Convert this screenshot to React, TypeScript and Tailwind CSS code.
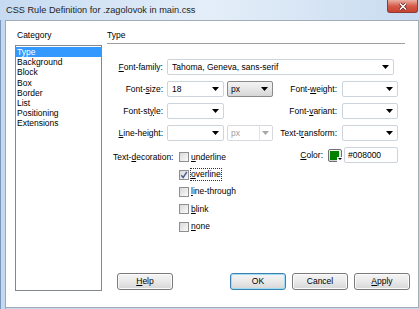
import type { ReactNode } from 'react'

const font = "font-['Liberation_Sans',Arial,sans-serif]"

function Arrow({ muted }: { muted?: boolean }) {
  return (
    <svg width="7" height="4" viewBox="0 0 7 4">
      <path d="M0 0h7L3.5 4z" fill={muted ? '#a8a8a8' : '#000'} />
    </svg>
  )
}

function Select({ className, value }: { className: string; value?: string }) {
  return (
    <div className={`flex h-[16px] items-center justify-between rounded-[2px] border border-[#ced4db] bg-white pl-[4px] pr-[4px] ${className}`}>
      <span className="leading-[14px]">{value}</span>
      <Arrow />
    </div>
  )
}

function Label({ className, children }: { className: string; children: ReactNode }) {
  return <span className={`whitespace-nowrap text-right leading-[11px] ${className}`}>{children}</span>
}

function Check({ checked, children, focus }: { checked?: boolean; children: ReactNode; focus?: boolean }) {
  return (
    <div className="flex h-[17.4px] items-center">
      <span className="flex h-[10px] w-[10px] items-center justify-center border border-[#8f8f8f] bg-linear-to-br from-[#d9d9d9] to-[#fafafa]">
        {checked && (
          <svg width="8" height="8" viewBox="0 0 8 8">
            <path d="M1.2 4.2l2 2.3L6.8 1" stroke="#4a5f97" strokeWidth="1.4" fill="none" />
          </svg>
        )}
      </span>
      <span className={`ml-[2px] leading-[11px] ${focus ? 'outline outline-1 outline-dotted outline-[#333]' : ''}`}>{children}</span>
    </div>
  )
}

function Btn({ children, primary, className }: { children: ReactNode; primary?: boolean; className: string }) {
  return (
    <div
      className={`flex h-[17px] w-[56px] items-center justify-center rounded-[3px] border bg-linear-to-b from-[#f4f4f4] via-[#e9e9e9] to-[#d7d7d7] leading-[11px] ${
        primary ? 'border-[#3c7fb1] shadow-[inset_0_0_0_1px_#9fdcf5]' : 'border-[#7a7a7a] shadow-[inset_0_0_0_1px_#fbfbfb]'
      } ${className}`}
    >
      {children}
    </div>
  )
}

export default function App() {
  const categories = ['Type', 'Background', 'Block', 'Box', 'Border', 'List', 'Positioning', 'Extensions']

  return (
    <div className={`flex h-[309px] w-[419px] flex-col overflow-hidden bg-[#c6d9ef] text-[8.5px] text-black ${font}`}>
      {/* title bar */}
      <div className="flex h-[20px] items-start justify-between bg-linear-to-r from-[#c6daf1] via-[#e4eef9] to-[#c8dbf0] pl-[6px]">
        <span className="mt-[4px] text-[9.2px] leading-[12px] text-[#1e1e1e]">CSS Rule Definition for .zagolovok in main.css</span>
        <div className="mr-[1px] flex h-[13px] w-[31px] items-center justify-center rounded-b-[3px] border border-t-0 border-[#8b3b33] bg-linear-to-b from-[#eab0a4] via-[#d65a4b] to-[#c7432f]">
          <svg width="10" height="9" viewBox="0 0 10 9">
            <path d="M2 1.5l6 6M8 1.5l-6 6" stroke="#5a1d18" strokeWidth="3" />
            <path d="M2 1.5l6 6M8 1.5l-6 6" stroke="#fff" strokeWidth="1.6" />
          </svg>
        </div>
      </div>

      <div className="flex flex-1">
        {/* left frame */}
        <div className="w-[6px] border-l border-r border-l-[#7a98bf] border-r-[#92abc9] bg-[#c4d8ee]" />

        {/* dialog body */}
        <div className="flex flex-1 flex-col">
          <div className="flex flex-1 border-b border-r border-t border-[#a3acb6] bg-white pb-[16px] pl-[9px] pt-[9px]">
            {/* category column */}
            <div className="flex w-[87px] flex-col">
              <span className="pl-[2px] leading-[11px]">Category</span>
              <div className="mt-[4px] h-[246px] border border-[#828790] pt-[1px]">
                {categories.map((c, i) => (
                  <div
                    key={c}
                    className={`h-[10.2px] pl-[1px] leading-[10.2px] ${i === 0 ? 'bg-[#3399ff] text-white' : ''}`}
                  >
                    {c}
                  </div>
                ))}
              </div>
            </div>

            {/* type panel */}
            <div className="ml-[5px] flex w-[304px] flex-col">
              <div className="mr-[6px] border-b border-[#a0a0a0] pb-[2px]">
                <span className="block leading-[11px]">Type</span>
              </div>

              {/* row 1 */}
              <div className="mt-[15px] flex items-center">
                <Label className="w-[56px]"><u>F</u>ont-family:</Label>
                <Select className="ml-[4px] w-[227px]" value="Tahoma, Geneva, sans-serif" />
              </div>

              {/* row 2 */}
              <div className="mt-[6px] flex items-center">
                <Label className="w-[56px]">Font-<u>s</u>ize:</Label>
                <Select className="ml-[4px] w-[57px]" value="18" />
                <div className="ml-[3px] flex h-[16px] w-[46px] items-center justify-between rounded-[2px] border border-[#8a8a8a] bg-linear-to-b from-[#f3f3f3] via-[#e6e6e6] to-[#d6d6d6] pl-[3px] pr-[4px]">
                  <span className="leading-[14px]">px</span>
                  <Arrow />
                </div>
                <Label className="w-[64px]">Font-<u>w</u>eight:</Label>
                <Select className="ml-[5px] w-[56px]" />
              </div>

              {/* row 3 */}
              <div className="mt-[6px] flex items-center">
                <Label className="w-[56px]">Font-st<u>y</u>le:</Label>
                <Select className="ml-[4px] w-[57px]" />
                <Label className="w-[113px]">Font-<u>v</u>ariant:</Label>
                <Select className="ml-[5px] w-[56px]" />
              </div>

              {/* row 4 */}
              <div className="mt-[6px] flex items-center">
                <Label className="w-[56px]"><u>L</u>ine-height:</Label>
                <Select className="ml-[4px] w-[57px]" />
                <div className="ml-[3px] flex h-[16px] w-[46px] items-center justify-between rounded-[2px] border border-[#d6d9dd] bg-white pl-[3px] pr-[3px] text-[#a0a0a0]">
                  <span className="leading-[14px]">px</span>
                  <div className="flex h-full items-center border-l border-[#e2e2e2] pl-[2px]">
                    <Arrow muted />
                  </div>
                </div>
                <Label className="w-[64px]">Text-t<u>r</u>ansform:</Label>
                <Select className="ml-[5px] w-[56px]" />
              </div>

              {/* row 5 */}
              <div className="mt-[6px] flex items-start">
                <Label className="mt-[4.5px] w-[62px] pl-[6px] text-left">Text-<u>d</u>ecoration:</Label>
                <div className="ml-[10px] flex w-[104px] flex-col pt-[1.5px]">
                  <Check><u>u</u>nderline</Check>
                  <Check checked focus><u>o</u>verline</Check>
                  <Check><u>l</u>ine-through</Check>
                  <Check><u>b</u>link</Check>
                  <Check><u>n</u>one</Check>
                </div>
                <div className="flex items-center">
                  <Label className="w-[40px]"><u>C</u>olor:</Label>
                  <div className="ml-[5px] flex h-[13px] w-[14px] items-start rounded-[2px] border border-[#707070] bg-linear-to-b from-[#f3f3f3] to-[#d5d5d5] p-[1px]">
                    <div className="flex h-[9px] w-[9px] items-end justify-end bg-[#008000]">
                      <div className="-mb-[2px] -mr-[4px] flex h-[5px] w-[6px] items-center justify-center bg-white">
                        <svg width="4" height="2" viewBox="0 0 4 2"><path d="M0 0h4L2 2z" fill="#000" /></svg>
                      </div>
                    </div>
                  </div>
                  <div className="ml-[2px] flex h-[16px] w-[54px] items-center rounded-[2px] border border-[#ced4db] bg-white pl-[3px] leading-[14px]">
                    #008000
                  </div>
                </div>
              </div>

              {/* buttons */}
              <div className="mb-[1px] mt-auto flex">
                <Btn className="ml-[10px]"><u>H</u>elp</Btn>
                <Btn className="ml-[57px]" primary>OK</Btn>
                <Btn className="ml-[6px]">Cancel</Btn>
                <Btn className="ml-[6px]"><u>A</u>pply</Btn>
              </div>
            </div>
          </div>
          <div className="h-[1px]" />
        </div>
      </div>
    </div>
  )
}
